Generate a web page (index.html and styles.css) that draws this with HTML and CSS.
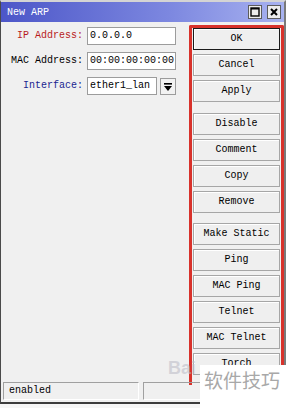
FILE: index.html
```html
<!DOCTYPE html>
<html>
<head>
    <meta charset="UTF-8">
    <title>New ARP</title>
    <link rel="stylesheet" href="styles.css">
</head>
<body>
    <div class="window">
        <div class="titlebar">
            <span class="title">New ARP</span>
            <span class="tb-btn">
                <svg width="12" height="12" viewBox="0 0 12 12"><rect x="2" y="2" width="8" height="8" fill="none" stroke="#000" stroke-width="1.4"/><line x1="2" y1="2.8" x2="10" y2="2.8" stroke="#000" stroke-width="1.4"/></svg>
            </span>
            <span class="tb-btn">
                <svg width="12" height="12" viewBox="0 0 12 12"><path d="M3 3 L9 9 M9 3 L3 9" stroke="#000" stroke-width="2"/></svg>
            </span>
        </div>
        <div class="main">
            <div class="form">
                <label class="lbl lbl-red">IP Address:</label>
                <div class="field">0.0.0.0</div>
                <label class="lbl">MAC Address:</label>
                <div class="field">00:00:00:00:00:00</div>
                <label class="lbl lbl-blue">Interface:</label>
                <div class="combo">
                    <div class="field field-short">ether1_lan</div>
                    <span class="drop">
                        <svg width="10" height="10" viewBox="0 0 10 10"><rect x="1" y="1" width="8" height="1.6" fill="#000"/><path d="M1 4 L9 4 L5 9 Z" fill="#000"/></svg>
                    </span>
                </div>
            </div>
            <div class="side">
                <div class="btn btn-default">OK</div>
                <div class="btn">Cancel</div>
                <div class="btn">Apply</div>
                <div class="btn group">Disable</div>
                <div class="btn">Comment</div>
                <div class="btn">Copy</div>
                <div class="btn">Remove</div>
                <div class="btn group2">Make Static</div>
                <div class="btn">Ping</div>
                <div class="btn">MAC Ping</div>
                <div class="btn">Telnet</div>
                <div class="btn">MAC Telnet</div>
                <div class="btn">Torch</div>
            </div>
        </div>
        <div class="statusbar">
            <div class="status status-left">enabled</div>
            <div class="status status-right"></div>
        </div>
    </div>

    <div class="ghost">Bai</div>
    <div class="watermark">软件技巧</div>
</body>
</html>
```

FILE: styles.css
```css
html {
    background: #f6f6f6;
}
body {
    margin: 0;
    font-family: "Liberation Mono", "DejaVu Sans Mono", monospace;
    font-size: 10px;
    color: #000;
}
.window {
    width: 283px;
    height: 400px;
    background: #f0f0f0;
    border-top: 2px solid #d4d4d4;
    border-left: 1px solid #4a4a4a;
    border-right: 2px solid #7a7a7a;
    border-bottom: 2px solid #3c3c3c;
    display: flex;
    flex-direction: column;
}
.titlebar {
    height: 20px;
    background: linear-gradient(to right, #4c56c8, #7d88e0 60%, #a8b2f0);
    display: flex;
    align-items: center;
    padding: 0 3px 0 6px;
    gap: 5px;
}
.title {
    flex: 1;
    color: #fff;
    font-size: 10px;
    padding-top: 1px;
}
.tb-btn {
    width: 12px;
    height: 12px;
    background: #ececec;
    border: 1px solid #5c5c5c;
    display: flex;
}
.main {
    flex: 1;
    display: flex;
    min-height: 0;
}
.form {
    width: 188px;
    padding-top: 5px;
    display: grid;
    grid-template-columns: 82px 89px;
    grid-auto-rows: 18px;
    column-gap: 4px;
    row-gap: 7px;
    align-content: start;
}
.lbl {
    text-align: right;
    line-height: 18px;
}
.lbl-red {
    color: #b81c1c;
}
.lbl-blue {
    color: #1a2590;
}
.field {
    background: #fff;
    border: 1px solid #9c9c9c;
    line-height: 16px;
    padding-left: 2px;
    overflow: hidden;
    white-space: nowrap;
}
.combo {
    display: flex;
    gap: 3px;
}
.field-short {
    width: 66px;
}
.drop {
    width: 14px;
    height: 15px;
    margin-top: 1px;
    border: 1px solid #9c9c9c;
    background: #f2f2f2;
    display: flex;
    align-items: center;
    justify-content: center;
}
.side {
    width: 87px;
    height: 357px;
    margin-top: 3px;
    border: 3px solid #d8322b;
    border-bottom: none;
    border-radius: 2px 2px 0 0;
    padding: 0 1px;
    overflow: hidden;
}
.btn {
    height: 20px;
    line-height: 20px;
    text-align: center;
    background: #efefef;
    border: 1px solid #a6a6a6;
    box-shadow: inset 1px 1px 0 #fff;
    margin-bottom: 4px;
}
.btn-default {
    border-color: #1a1a1a;
}
.group {
    margin-top: 11px;
}
.group2 {
    margin-top: 10px;
}
.statusbar {
    height: 22px;
    display: flex;
    gap: 4px;
    padding: 2px;
    box-sizing: border-box;
}
.status {
    border: 1px solid #a0a0a0;
    border-right-color: #fff;
    border-bottom-color: #fff;
    line-height: 16px;
    padding-left: 5px;
}
.status-left {
    width: 129px;
}
.status-right {
    flex: 1;
}
.ghost {
    position: absolute;
    left: 168px;
    top: 358px;
    font-family: "Liberation Sans", Arial, sans-serif;
    font-weight: bold;
    font-size: 18px;
    color: rgba(190, 190, 200, 0.6);
}
.watermark {
    position: absolute;
    left: 200px;
    top: 365px;
    width: 86px;
    height: 43px;
    background: #fff;
    color: #a8a8a8;
    font-family: "Noto Sans CJK SC", sans-serif;
    font-size: 19px;
    line-height: 30px;
    padding-left: 4px;
    box-sizing: border-box;
}
```
